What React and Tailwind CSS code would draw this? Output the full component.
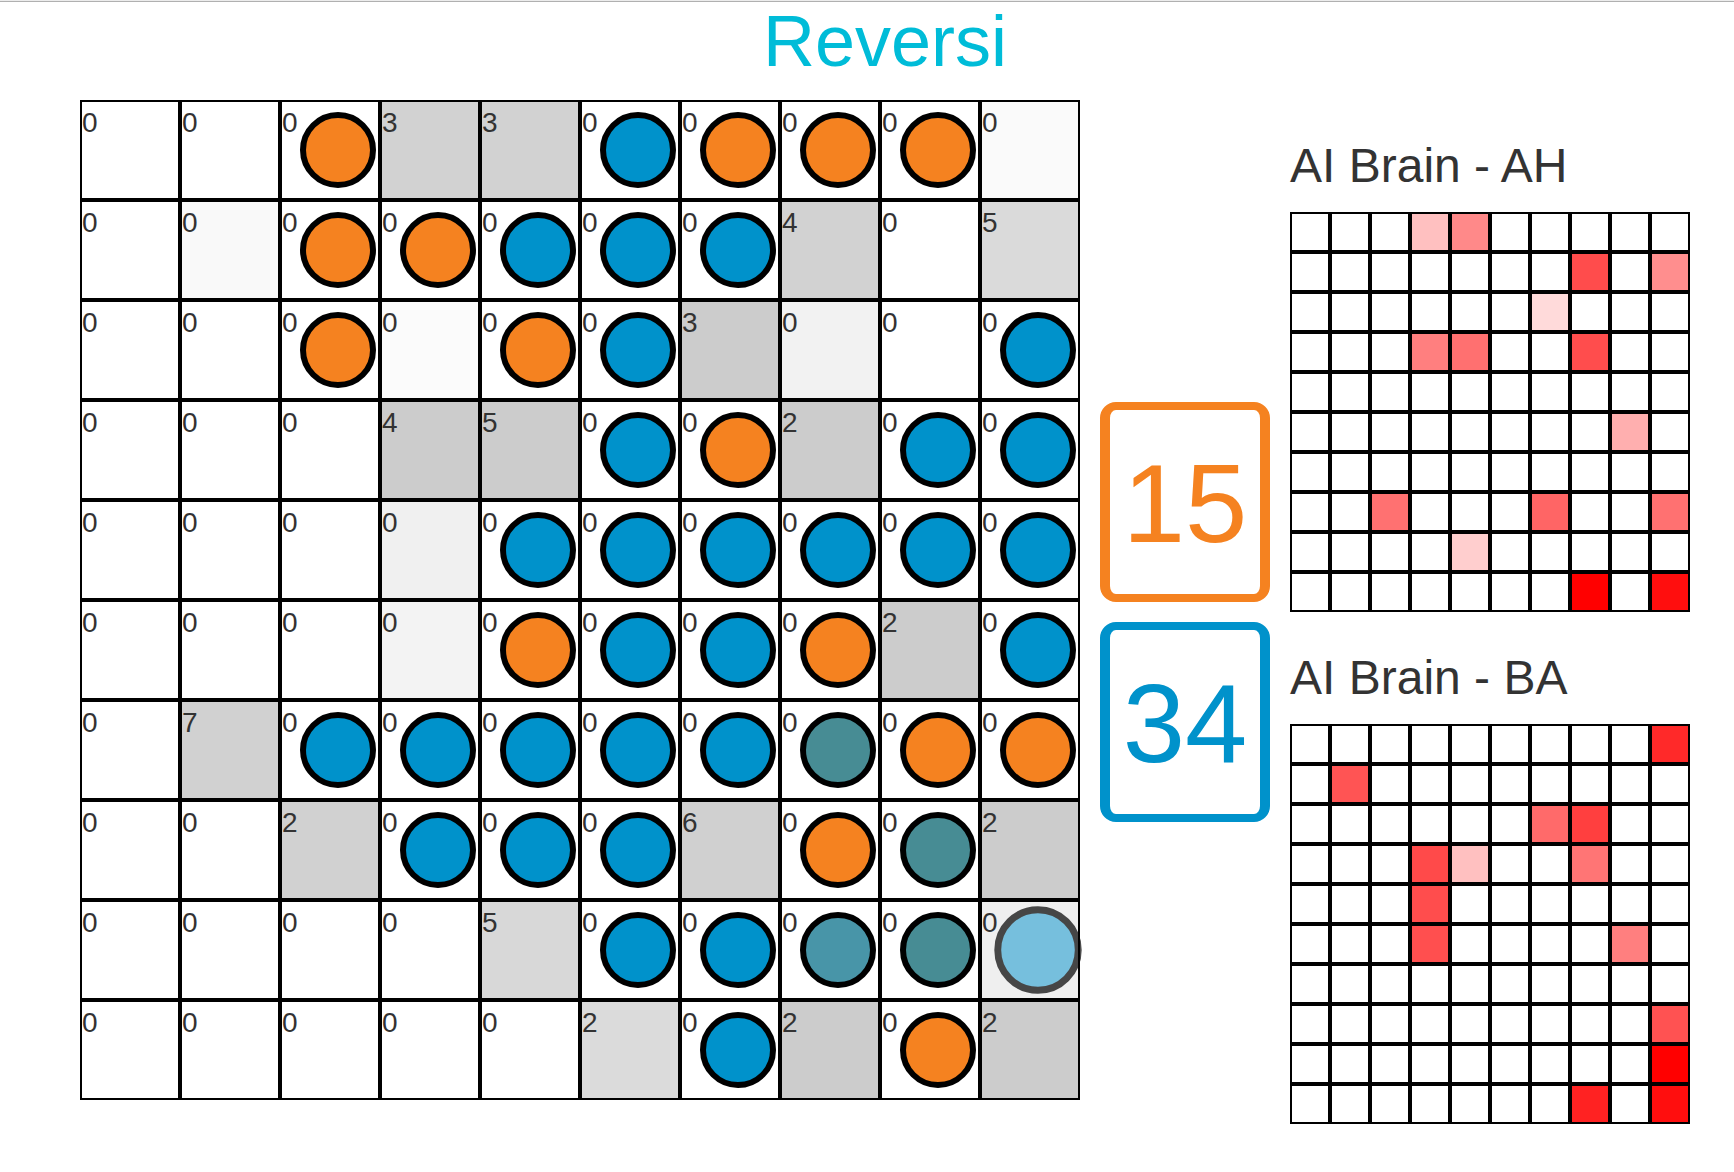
import React from "react";

// O = orange, B = blue, T = teal (just flipped), S = slightly bluer teal, H = hovered preview
const pieces = [
  "..O..BOOO.",
  "..OOBBB...",
  "..O.OB...B",
  ".....BO.BB",
  "....BBBBBB",
  "....OBBO.B",
  "..BBBBBTOO",
  "...BBB.OT.",
  ".....BBSTH",
  "......B.O.",
];

const moves = [
  "0003300000",
  "0000000405",
  "0000003000",
  "0004500200",
  "0000000000",
  "0000000020",
  "0700000000",
  "0020006002",
  "0000500000",
  "0000020202",
];

// grey level of a shaded cell, keyed by row-column
const shades = {
  "0-3": 210, "0-4": 210, "0-9": 250,
  "1-1": 249, "1-7": 210, "1-9": 218,
  "2-3": 251, "2-6": 204, "2-7": 242,
  "3-3": 204, "3-4": 204, "3-7": 204,
  "4-3": 240, "5-3": 243, "5-8": 204,
  "6-1": 209, "7-2": 209, "7-6": 208, "7-9": 204,
  "8-4": 216, "8-9": 239,
  "9-5": 219, "9-7": 204, "9-9": 204,
};

const pieceStyles = {
  O: "bg-[#f58220]",
  B: "bg-[#0092cb]",
  T: "bg-[#478c94]",
  S: "bg-[#4895a8]",
  H: "z-10 scale-115 bg-[#44abd6] opacity-70",
};

// green/blue channel of a red heat cell, keyed by row-column
const brains = [
  {
    name: "AH",
    heat: {
      "0-3": 192, "0-4": 137, "1-7": 76, "1-9": 142, "2-6": 218,
      "3-3": 127, "3-4": 112, "3-7": 77, "5-8": 175,
      "7-2": 113, "7-6": 101, "7-9": 113, "8-4": 206, "9-7": 0, "9-9": 14,
    },
  },
  {
    name: "BA",
    heat: {
      "0-9": 41, "1-1": 84, "2-6": 106, "2-7": 63, "3-3": 74, "3-4": 192,
      "3-7": 117, "4-3": 77, "5-3": 79, "5-8": 127, "7-9": 82,
      "8-9": 0, "9-7": 34, "9-9": 14,
    },
  },
];

function Board() {
  return (
    <div className="grid min-w-0 flex-1 grid-cols-10">
      {moves.map((row, r) =>
        [...row].map((value, c) => {
          const piece = pieces[r][c];
          const level = shades[`${r}-${c}`] ?? 255;
          return (
            <button
              key={`${r}-${c}`}
              type="button"
              className="flex aspect-square items-start border-2 border-black text-left"
              style={{ backgroundColor: `rgb(${level}, ${level}, ${level})` }}
            >
              <span className="text-[28px] leading-[42px]">{value}</span>
              {piece !== "." && (
                <span
                  className={`mr-0.5 ml-auto size-[76px] shrink-0 self-center rounded-full border-6 border-black ${pieceStyles[piece]}`}
                />
              )}
            </button>
          );
        })
      )}
    </div>
  );
}

function Score({ value, tone }) {
  return (
    <div
      className={`flex h-[200px] items-center justify-center rounded-2xl border-x-10 border-y-8 pt-1 text-[112px] leading-none ${tone}`}
    >
      {value}
    </div>
  );
}

function Brain({ name, heat }) {
  return (
    <section>
      <h2 className="pt-[34px] pb-[14px] text-[48px] leading-[64px]">AI Brain - {name}</h2>
      <div className="grid grid-cols-10">
        {Array.from({ length: 100 }, (_, i) => {
          const level = heat[`${Math.floor(i / 10)}-${i % 10}`] ?? 255;
          return (
            <div
              key={i}
              className="aspect-square border-2 border-black"
              style={{ backgroundColor: `rgb(255, ${level}, ${level})` }}
            />
          );
        })}
      </div>
    </section>
  );
}

export default function App() {
  return (
    <div className="min-h-screen border-t border-[#ececec] bg-white font-['Liberation_Sans',Arial,sans-serif] text-[#333333]">
      <div className="border-t border-[#b0b0b0] pr-11 pl-20">
        <h1 className="pb-5 text-center text-[72px] leading-[78px] text-[#00bcd8]">Reversi</h1>
        <main className="flex items-start gap-5">
          <Board />
          <div className="flex w-[170px] shrink-0 flex-col gap-5 pt-[302px]">
            <Score value={15} tone="border-[#f58220] text-[#f58220]" />
            <Score value={34} tone="border-[#0092cb] text-[#0092cb]" />
          </div>
          <aside className="w-[400px] shrink-0">
            {brains.map((brain) => (
              <Brain key={brain.name} {...brain} />
            ))}
          </aside>
        </main>
      </div>
    </div>
  );
}
